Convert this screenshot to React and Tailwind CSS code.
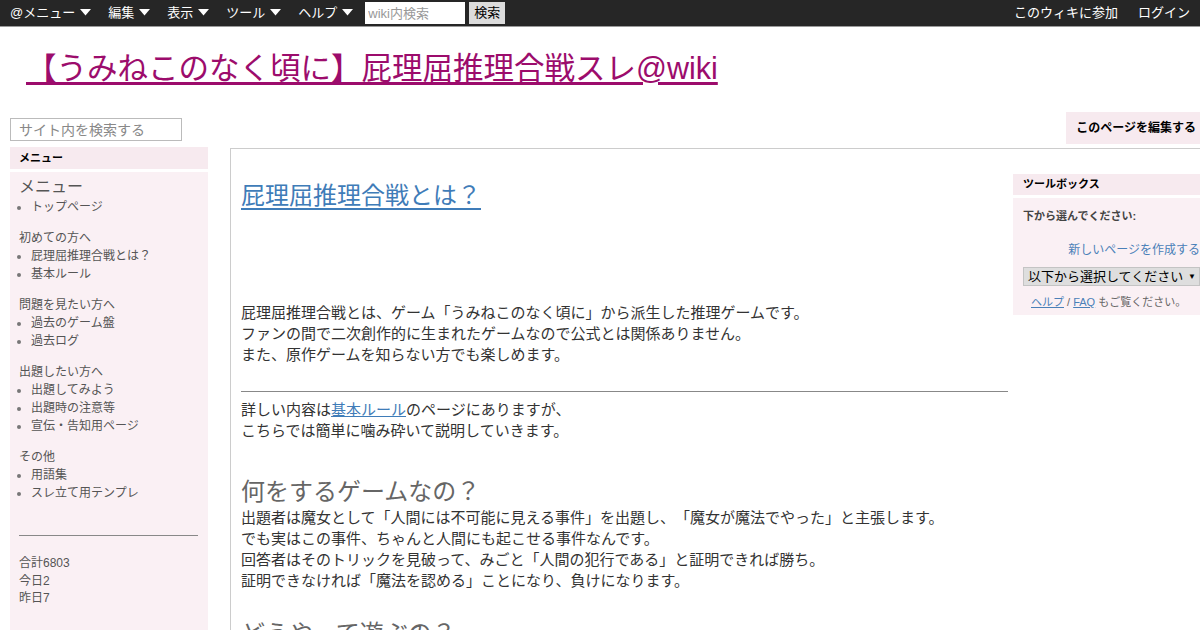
import { useState } from 'react';

const FONT = "font-['Liberation_Sans','Noto_Sans_CJK_JP',sans-serif] [text-spacing-trim:space-all]";

const TOP_MENU = ['@メニュー', '編集', '表示', 'ツール', 'ヘルプ'];

const SIDE_MENU = [
  { label: null, items: ['トップページ'] },
  { label: '初めての方へ', items: ['屁理屈推理合戦とは？', '基本ルール'] },
  { label: '問題を見たい方へ', items: ['過去のゲーム盤', '過去ログ'] },
  { label: '出題したい方へ', items: ['出題してみよう', '出題時の注意等', '宣伝・告知用ページ'] },
  { label: 'その他', items: ['用語集', 'スレ立て用テンプレ'] },
];

function Caret() {
  return (
    <svg width="11" height="7" viewBox="0 0 11 7" className="ml-[5px]">
      <path d="M0 0 L11 0 L5.5 6.5 Z" fill="#fff" />
    </svg>
  );
}

function TopBar() {
  const [q, setQ] = useState('');
  return (
    <div className="flex h-[27px] items-start border-b border-[#9a9a9a] bg-[#262626] text-[13px] leading-[25px] text-white">
      <div className="flex items-center pl-[10px]">
        {TOP_MENU.map((m, i) => (
          <span key={m} className={`flex items-center ${i === TOP_MENU.length - 1 ? 'mr-[12px]' : 'mr-[17px]'}`}>
            {m}
            <Caret />
          </span>
        ))}
        <input
          value={q}
          onChange={(e) => setQ(e.target.value)}
          placeholder="wiki内検索"
          className="mt-[1px] h-[22px] w-[100px] bg-white px-[3px] text-[13px] text-black outline-none placeholder:text-[#999]"
        />
        <button className="ml-[4px] mt-[1px] h-[22px] w-[36px] bg-[#dcdcdc] text-[13px] leading-[22px] text-black">
          検索
        </button>
      </div>
      <div className="ml-auto flex gap-[20px] pr-[10px]">
        <span>このウィキに参加</span>
        <span>ログイン</span>
      </div>
    </div>
  );
}

function Sidebar() {
  return (
    <aside className="ml-[10px] w-[198px] shrink-0 text-[12px] text-[#555]">
      <input
        placeholder="サイト内を検索する"
        className="mt-[6px] h-[23px] w-[172px] border border-[#bbb] bg-white px-[8px] text-[14px] outline-none placeholder:text-[#888]"
      />
      <div className="mt-[6px] h-[22px] bg-[#f7eaef] pl-[9px] text-[11px] font-bold leading-[22px] text-black">
        メニュー
      </div>
      <div className="mt-[3px] h-[600px] bg-[#faf0f4] pl-[9px] pr-[10px] pt-[4px]">
        <div className="text-[16px] leading-[22px] text-[#555]">メニュー</div>
        {SIDE_MENU.map((s, i) => (
          <div key={i} className={i === 0 ? 'mt-0' : 'mt-[13px]'}>
            {s.label && <div className="leading-[18px]">{s.label}</div>}
            <ul className="list-disc pl-[12px] marker:text-[#777]">
              {s.items.map((it) => (
                <li key={it} className="leading-[18px]">
                  {it}
                </li>
              ))}
            </ul>
          </div>
        ))}
        <hr className="mt-[33px] border-t border-[#888]" />
        <div className="mt-[19px] leading-[17.5px]">
          <div>合計6803</div>
          <div>今日2</div>
          <div>昨日7</div>
        </div>
      </div>
    </aside>
  );
}

function Toolbox() {
  return (
    <div className="mt-[25px] w-[187px] shrink-0 text-[11px]">
      <div className="h-[21px] bg-[#f7eaef] pl-[10px] font-bold leading-[21px] text-black">ツールボックス</div>
      <div className="mt-[3px] h-[117px] bg-[#faf0f4] pl-[10px] pt-[10px]">
        <div className="font-bold leading-[16px] text-[#444]">下から選んでください:</div>
        <div className="mt-[18px] text-right text-[12px] leading-[16px] text-[#4a80b8]">新しいページを作成する</div>
        <div className="mt-[9px] flex h-[19px] items-center justify-between border border-[#c4c4c4] bg-[#dedede] pl-[4px] pr-[3px] text-[13px] text-black">
          <span>以下から選択してください</span>
          <span className="text-[8px]">▼</span>
        </div>
        <div className="mt-[8px] pl-[8px] leading-[16px] text-[#666]">
          <span className="text-[#4a80b8] underline">ヘルプ</span> / <span className="text-[#4a80b8] underline">FAQ</span> もご覧ください。
        </div>
      </div>
    </div>
  );
}

function MainContent() {
  return (
    <div className="mt-[4px] flex border-l border-t border-[#cccccc] pl-[10px]">
      <div className="w-[767px] shrink-0 text-[15px] leading-[21px] text-[#333]">
        <h1 className="mt-[32px] text-[24px] leading-[30px] text-[#3f7cb8] underline underline-offset-[4px]">
          屁理屈推理合戦とは？
        </h1>
        <p className="mt-[91px]">
          屁理屈推理合戦とは、ゲーム「うみねこのなく頃に」から派生した推理ゲームです。
          <br />
          ファンの間で二次創作的に生まれたゲームなので公式とは関係ありません。
          <br />
          また、原作ゲームを知らない方でも楽しめます。
        </p>
        <hr className="mt-[26px] border-t border-[#888]" />
        <p className="mt-[7px]">
          詳しい内容は<span className="text-[#3f7cb8] underline">基本ルール</span>のページにありますが、
          <br />
          こちらでは簡単に噛み砕いて説明していきます。
        </p>
        <h2 className="mt-[36px] text-[24px] leading-[30px] text-[#666]">何をするゲームなの？</h2>
        <p>
          出題者は魔女として「人間には不可能に見える事件」を出題し、「魔女が魔法でやった」と主張します。
          <br />
          でも実はこの事件、ちゃんと人間にも起こせる事件なんです。
          <br />
          回答者はそのトリックを見破って、みごと「人間の犯行である」と証明できれば勝ち。
          <br />
          証明できなければ「魔法を認める」ことになり、負けになります。
        </p>
        <h2 className="mt-[28px] text-[24px] leading-[30px] text-[#666]">どうやって遊ぶの？</h2>
      </div>
      <div className="ml-auto">
        <Toolbox />
      </div>
    </div>
  );
}

export default function App() {
  return (
    <div className={`${FONT} h-[630px] overflow-hidden bg-white`}>
      <TopBar />
      <div className="pl-[26px] pt-[23px]">
        <a className="text-[30.5px] leading-[36px] text-[#9c0c6c] underline decoration-[3px] underline-offset-[3px]">
          【うみねこのなく頃に】屁理屈推理合戦スレ@wiki
        </a>
      </div>
      <div className="mt-[26px] flex">
        <Sidebar />
        <div className="ml-[22px] flex-1">
          <div className="flex justify-end">
            <div className="h-[32px] bg-[#f7eaef] pl-[10px] pr-[4px] text-[12px] font-bold leading-[32px] text-black">
              このページを編集する
            </div>
          </div>
          <MainContent />
        </div>
      </div>
    </div>
  );
}
